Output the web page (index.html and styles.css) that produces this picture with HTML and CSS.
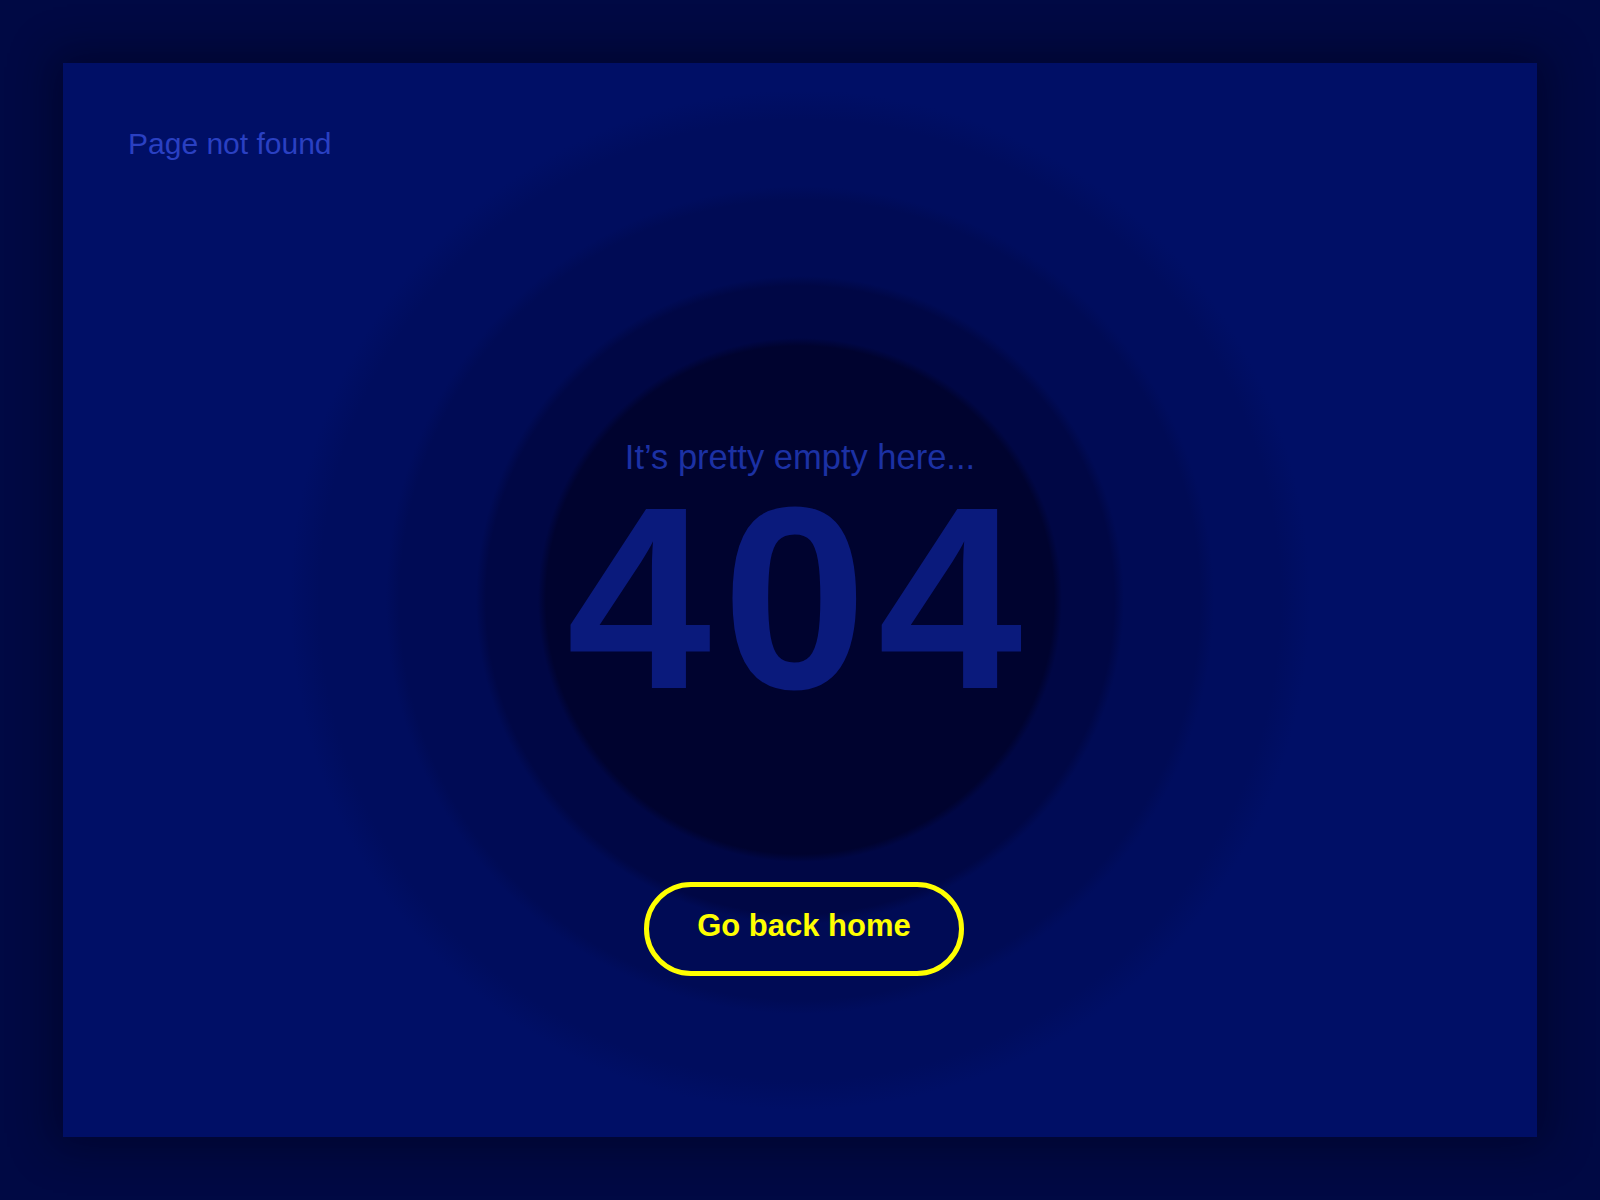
FILE: index.html
```html
<!DOCTYPE html>
<html lang="en">
<head>
    <meta charset="UTF-8">
    <meta name="viewport" content="width=device-width, initial-scale=1.0">
    <title>Page not found</title>
    <link rel="stylesheet" href="styles.css">
</head>
<body>
    <div class="card">
        <div class="title">Page not found</div>
        <div class="center">
            <p class="subtitle">It’s pretty empty here...</p>
            <h1 class="code">404</h1>
            <a class="home-btn" href="#">Go back home</a>
        </div>
    </div>
</body>
</html>
```

FILE: styles.css
```css
body {
    margin: 0;
    padding: 63px;
    font-family: "Liberation Sans", Arial, sans-serif;
    background: #000944;
    min-height: 1200px;
    box-sizing: border-box;
}
.card {
    height: 1074px;
    box-sizing: border-box;
    padding: 64px 65px;
    background: radial-gradient(circle at center,
        #00032f 0 254px,
        #000745 262px 314px,
        #000b55 324px 400px,
        #000d5e 414px 480px,
        #000f66 510px);
    box-shadow: 0 0 40px 10px rgba(0, 0, 20, 0.45);
}
.title {
    font-size: 30px;
    line-height: 34px;
    color: #2a40c2;
}
.center {
    display: flex;
    flex-direction: column;
    align-items: center;
    margin-top: 276px;
}
.subtitle {
    margin: 0;
    font-size: 34.5px;
    line-height: 40px;
    color: #1c31a4;
}
.code {
    margin: 21px 0 0;
    font-size: 260px;
    line-height: 200px;
    font-weight: bold;
    letter-spacing: 11px;
    color: #0a1a7c;
}
.home-btn {
    margin: 184px 0 0 8px;
    padding: 22px 48px 28px;
    border: 5px solid #ffff00;
    border-radius: 50px;
    font-size: 31px;
    line-height: 34px;
    font-weight: bold;
    color: #ffff00;
    text-decoration: none;
}
```
